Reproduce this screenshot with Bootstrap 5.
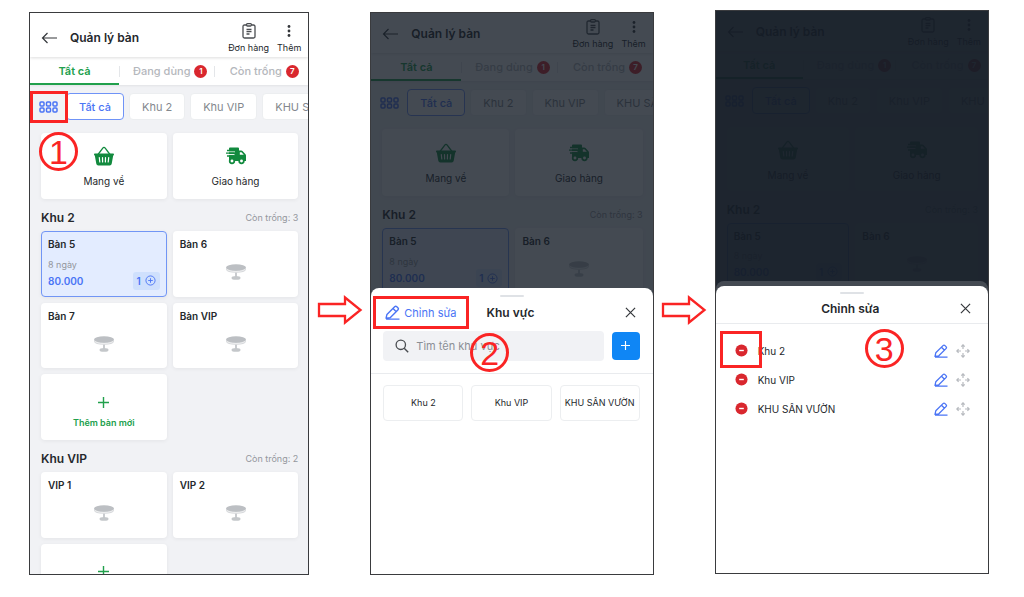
<!DOCTYPE html>
<html lang="vi">
<head>
<meta charset="utf-8">
<meta name="viewport" content="width=device-width, initial-scale=1">
<title>Quản lý bàn</title>
<link href="https://cdn.jsdelivr.net/npm/bootstrap@5.3.0/dist/css/bootstrap.min.css" rel="stylesheet">
<style>
:root { --red: #fa2424; --blue: #4a74f5; --green: #21a04c; --ink: #25282c; }
body { font-family: Inter, "Noto Sans", sans-serif; font-size: 11px; line-height: 14px; color: var(--ink); background: #fff; }
button { font: inherit; color: inherit; background: none; border: 0; padding: 0; }
h1, h2, h3 { margin: 0; font-weight: 600; }
svg { display: block; }
.steps { display: grid; grid-template-columns: 281fr 61px 284fr 61px 275fr; align-items: start; padding: 12px 35px 20px 29px; }
.phone { --head: 40px; --head-pad: 2px; --tabs: 28px; position: relative; overflow: hidden; border: 1px solid #3a3b3e; background: #f1f2f5; aspect-ratio: 284 / 564; }
.phone-one { --head: 44px; --head-pad: 6px; aspect-ratio: 281 / 564; }
.phone-three { margin-top: -2px; aspect-ratio: 275 / 565; }
.flow-arrow { justify-self: center; margin-top: 283px; }
.app-head { height: var(--head); padding: var(--head-pad) 7px 0 11px; background: #fff; box-shadow: 0 1px 3px #0002; position: relative; }
.app-head h1 { font-size: 12px; line-height: 16px; }
.head-action { font-size: 9px; line-height: 11px; gap: 3px; }
.tab-row { height: var(--tabs); background: #fff; font-size: 11px; font-weight: 500; color: #b4b7bc; box-shadow: 0 1px 2px #0001; }
.tab-row button { flex: 1 1 34%; padding-left: 14px; position: relative; white-space: nowrap; }
.tab-row button + button::before { content: ""; position: absolute; left: 0; top: 9px; height: 11px; border-left: 1px solid #e4e6e9; }
.tab-row .tab-on { flex-basis: 32%; padding: 2px 0 0; color: var(--green); font-weight: 600; border-bottom: 2px solid var(--green); }
.tab-row .tab-free { padding-left: 16px; }
.count { width: 13px; height: 13px; border-radius: 50%; background: #d9272e; color: #fff; font-size: 8px; line-height: 13px; font-weight: 600; }
.chips { padding: 8px 0 13px 9px; gap: 5px; overflow: hidden; }
.chip { flex: none; height: 27px; padding: 0 12px; border-radius: 4px; border: 1px solid #eceef0; background: #fff; font-size: 11px; color: #84888e; white-space: nowrap; }
.chip-on { border-color: #6f93f7; color: var(--blue); font-weight: 500; margin-left: 3px; }
.tiles { display: grid; grid-template-columns: 1fr 1fr; gap: 6px; padding: 0 10px 0 11px; }
.tile { aspect-ratio: 126 / 66; border-radius: 4px; background: #fff; box-shadow: 0 1px 4px #0000000f; position: relative; font-size: 10px; }
.tile h3 { font-size: 10px; line-height: 12px; }
.tile-pick { padding-top: 3px; }
.tile-table { padding: 7px; text-align: left; }
.tile-busy { background: #e3ecff; border: 1px solid #7195f5; padding: 6px; }
.tile-new { font-size: 9px; padding-top: 12px; }
.seat { margin: 14px auto 0; }
.stay { font-size: 9px; }
.qty { background: #cfe0fd; border-radius: 3px; padding: 2px 4px 2px 3px; }
.area-head { height: 32px; padding: 11px 10px 0 11px; }
.area-head h2 { font-size: 12px; line-height: 16px; }
.head-note { font-size: 9px; line-height: 16px; }
.faint { color: #94979d; }
.blue { color: var(--blue); }
.green { color: var(--green); }
.dim { position: absolute; inset: 0; background: rgba(21, 29, 39, .8); }
.sheet { position: absolute; inset: 49% 0 0 0; background: #fff; border-radius: 8px 8px 0 0; }
.sheet-areas { padding-top: 1px; }
.sheet-below { inset: 48% 0 0 0; }
.grip { width: 24px; height: 2px; border-radius: 2px; background: #dfe2e6; margin: 6px auto 0; }
.sheet-head { height: 30px; padding: 0 17px 0 14px; display: grid; grid-template-columns: 1fr auto 1fr; align-items: center; }
.sheet-areas .sheet-head { padding-top: 2px; }
.sheet-head h2 { font-size: 12px; line-height: 16px; }
.sheet-head .close-btn { justify-self: end; }
.edit-link { font-size: 11px; }
.search-row { padding: 4px 13px 12px 12px; height: 47px; }
.search { height: 30px; border-radius: 4px; background: #f1f2f5; padding: 0 12px; gap: 7px; }
.search input { border: 0; background: none; outline: 0; font-size: 11px; min-width: 0; width: 100%; padding: 0; }
.search input::placeholder { color: #8b8f95; opacity: 1; }
.add-btn { width: 28px; height: 28px; flex: none; border-radius: 4px; background: #0f86f5; }
.areas { display: grid; grid-template-columns: repeat(3, 1fr); gap: 8px; padding: 11px 13px 0 12px; }
.areas button { height: 36px; border: 1px solid #eceef0; border-radius: 4px; font-size: 9px; white-space: nowrap; }
.rule { border-bottom: 1px solid #e9ebee; }
.edit-list { padding: 12px 18px 0 19px; }
.edit-list li { height: 29px; font-size: 10px; }
.edit-name { padding-left: 10px; }
.frame { position: absolute; border: 3px solid var(--red); pointer-events: none; }
.step-no { position: absolute; width: 39px; height: 39px; border: 3px solid var(--red); border-radius: 50%; font-family: "Liberation Sans", Arial, sans-serif; font-size: 34px; line-height: 34px; text-align: center; color: var(--red); pointer-events: none; }
</style>
</head>
<body>

<svg width="0" height="0" class="position-absolute" aria-hidden="true">
  <symbol id="i-back" viewBox="0 0 16 12"><path d="M15.500 6H1M6 1 1 6l5 5" fill="none" stroke="#34373b" stroke-width="1.200"/></symbol>
  <symbol id="i-clip" viewBox="0 0 14 16"><path d="M4 2H2.500Q1 2 1 3.500v10Q1 15 2.500 15h9q1.500 0 1.500-1.500v-10Q13 2 11.500 2H10" fill="none" stroke="#4a4d51" stroke-width="1.300"/><path d="M4.500 1.800Q4.500.700 5.500.700h3q1 0 1 1.100T8.500 3h-3q-1 0-1-1.200ZM4.500 6.500h5M4.500 8.700h5M4.500 11h3" fill="none" stroke="#4a4d51" stroke-width="1.300"/></symbol>
  <symbol id="i-dots" viewBox="0 0 4 16"><g fill="#34373b"><circle cx="2" cy="3.500" r="1.400"/><circle cx="2" cy="8" r="1.400"/><circle cx="2" cy="12.500" r="1.400"/></g></symbol>
  <symbol id="i-grid" viewBox="0 0 19 12"><g fill="none" stroke="#4a74f5" stroke-width="1.500"><rect x="1" y="1" width="4" height="4" rx="1"/><rect x="7.500" y="1" width="4" height="4" rx="1"/><rect x="14" y="1" width="4" height="4" rx="1"/><rect x="1" y="7" width="4" height="4" rx="1"/><rect x="7.500" y="7" width="4" height="4" rx="1"/><rect x="14" y="7" width="4" height="4" rx="1"/></g></symbol>
  <symbol id="i-basket" viewBox="0 0 20 20"><path d="M4 8.500 8.600 2.300Q10 .500 11.400 2.300L16 8.500" fill="none" stroke="#128a3e" stroke-width="1.300"/><path d="M.800 7.500h18.400q.800 0 .800.900t-.800 1.100L17.700 17.700Q17.400 19.500 15.700 19.500H4.300Q2.600 19.500 2.300 17.700L.800 9.500Q0 9.300 0 8.400t.8-.900Z" fill="#128a3e"/><path d="m5.300 11.500.5 4.500M8.500 11.500l.1 4.500M11.500 11.500l-.1 4.500M14.700 11.500l-.5 4.500" stroke="#fff" stroke-width="1.200" stroke-linecap="round"/></symbol>
  <symbol id="i-truck" viewBox="0 0 20 17"><path d="M3 1Q3 0 4 0h8q1 0 1 1v2h2.300q.700 0 1.200.500l2.800 3q.700.700.700 1.500v5.500H3Z" fill="#128a3e"/><path d="M13.800 4.700h1.700l2.300 2.600h-4Z" fill="#fff"/><path d="M2 4.300h7M2 7.100h6.500" stroke="#fff" stroke-width="1"/><path d="M1 3h8.500M0 5.700h8.500M1 8.500h7" stroke="#128a3e" stroke-width="1.300"/><g fill="#fff" stroke="#128a3e" stroke-width="1.700"><circle cx="6" cy="13.500" r="2.300"/><circle cx="15.500" cy="13.500" r="2.300"/></g></symbol>
  <symbol id="i-seat" viewBox="0 0 20 16"><path d="M0 4v1.500Q1 8.800 10 8.800t10-3.300V4" fill="#d4d6d9"/><ellipse cx="10" cy="3.500" rx="10" ry="3.300" fill="#bcbfc3"/><path d="M.300 4.900Q3 7.500 10 7.500t9.700-2.600" fill="none" stroke="#fff" stroke-width=".6"/><path d="M10 8.800v4.700" stroke="#bcbfc3" stroke-width="1.600"/><ellipse cx="10" cy="13.900" rx="4.500" ry="1.900" fill="#c4c7ca"/></symbol>
  <symbol id="i-plus" viewBox="0 0 11 11"><path d="M5.500 0v11M0 5.500h11" stroke="currentColor" stroke-width="1.400"/></symbol>
  <symbol id="i-ring" viewBox="0 0 12 12"><circle cx="6" cy="6" r="5" fill="none" stroke="currentColor"/><path d="M6 3.500v5M3.500 6h5" stroke="currentColor"/></symbol>
  <symbol id="i-pen" viewBox="0 0 14 14"><path d="M1 12.300 1.800 8.800 9 1.600q1-1 2 0l1 1q1 1 0 2L4.800 11.800ZM7.500 3.200l3 3M1 13.200h12.500" fill="none" stroke="#4a74f5" stroke-width="1.300" stroke-linejoin="round"/></symbol>
  <symbol id="i-x" viewBox="0 0 12 12"><path d="m1 1 10 10M11 1 1 11" stroke="#34373b" stroke-width="1.300"/></symbol>
  <symbol id="i-find" viewBox="0 0 14 14"><circle cx="5.800" cy="5.800" r="4.700" fill="none" stroke="#4a4d51" stroke-width="1.300"/><path d="m9.200 9.200 4 4" stroke="#4a4d51" stroke-width="1.400"/></symbol>
  <symbol id="i-minus" viewBox="0 0 14 14"><circle cx="7" cy="7" r="6.500" fill="#d9272e"/><path d="M4.500 7h5" stroke="#fff" stroke-width="1.500"/></symbol>
  <symbol id="i-move" viewBox="0 0 14 14"><path d="M7 5V1M5.300 2.600 7 .800l1.700 1.800M7 9v4M5.300 11.400 7 13.200l1.700-1.800M5 7H1M2.600 5.300.800 7l1.800 1.700M9 7h4M11.400 5.300 13.200 7l-1.800 1.700" fill="none" stroke="#b7babf" stroke-width="1.200"/></symbol>
  <symbol id="i-arrow" viewBox="0 0 46 30"><path d="M2 9h26V2.500L43.500 15 28 27.500V21H2Z" fill="#fff" stroke="#fa2424" stroke-width="2.300"/></symbol>
</svg>

<template id="table-screen">
  <header class="app-head d-flex align-items-center">
    <button type="button" aria-label="Quay lại"><svg width="17" height="12"><use href="#i-back"/></svg></button>
    <h1 class="ms-2 ps-1 me-auto">Quản lý bàn</h1>
    <button type="button" class="head-action d-flex flex-column align-items-center me-2"><svg width="14" height="16"><use href="#i-clip"/></svg>Đơn hàng</button>
    <button type="button" class="head-action d-flex flex-column align-items-center"><svg width="4" height="16"><use href="#i-dots"/></svg>Thêm</button>
  </header>
  <nav class="tab-row d-flex">
    <button type="button" class="tab-on">Tất cả</button>
    <button type="button" class="d-flex align-items-center gap-1">Đang dùng <span class="count">1</span></button>
    <button type="button" class="tab-free d-flex align-items-center gap-1">Còn trống <span class="count">7</span></button>
  </nav>
  <div class="chips d-flex align-items-center">
    <button type="button" class="flex-shrink-0" aria-label="Khu vực"><svg width="19" height="12"><use href="#i-grid"/></svg></button>
    <button type="button" class="chip chip-on">Tất cả</button>
    <button type="button" class="chip">Khu 2</button>
    <button type="button" class="chip">Khu VIP</button>
    <button type="button" class="chip">KHU SÂN VƯỜN</button>
  </div>
  <div class="tiles">
    <button type="button" class="tile tile-pick d-flex flex-column align-items-center justify-content-center gap-2"><svg width="20" height="20"><use href="#i-basket"/></svg>Mang về</button>
    <button type="button" class="tile tile-pick d-flex flex-column align-items-center justify-content-center gap-2"><svg width="20" height="20"><use href="#i-truck"/></svg>Giao hàng</button>
  </div>
  <div class="area-head d-flex justify-content-between"><h2>Khu 2</h2><span class="faint head-note">Còn trống: 3</span></div>
  <div class="tiles">
    <article class="tile tile-table tile-busy d-flex flex-column">
      <h3>Bàn 5</h3>
      <span class="faint stay mt-auto">8 ngày</span>
      <div class="blue fw-semibold d-flex justify-content-between align-items-center"><span>80.000</span><span class="qty d-flex align-items-center gap-1">1 <svg width="11" height="11"><use href="#i-ring"/></svg></span></div>
    </article>
    <article class="tile tile-table"><h3>Bàn 6</h3><svg class="seat" width="20" height="16"><use href="#i-seat"/></svg></article>
    <article class="tile tile-table"><h3>Bàn 7</h3><svg class="seat" width="20" height="16"><use href="#i-seat"/></svg></article>
    <article class="tile tile-table"><h3>Bàn VIP</h3><svg class="seat" width="20" height="16"><use href="#i-seat"/></svg></article>
    <button type="button" class="tile tile-new green fw-semibold d-flex flex-column align-items-center justify-content-center gap-2"><svg width="11" height="11"><use href="#i-plus"/></svg>Thêm bàn mới</button>
  </div>
  <div class="area-head d-flex justify-content-between"><h2>Khu VIP</h2><span class="faint head-note">Còn trống: 2</span></div>
  <div class="tiles">
    <article class="tile tile-table"><h3>VIP 1</h3><svg class="seat" width="20" height="16"><use href="#i-seat"/></svg></article>
    <article class="tile tile-table"><h3>VIP 2</h3><svg class="seat" width="20" height="16"><use href="#i-seat"/></svg></article>
    <button type="button" class="tile tile-new green d-flex flex-column align-items-center justify-content-center pb-4" aria-label="Thêm bàn mới"><svg width="11" height="11"><use href="#i-plus"/></svg></button>
  </div>
</template>

<main class="steps">
  <section class="phone phone-one">
    <div data-screen></div>
    <span class="frame" style="left:0;top:78px;width:38px;height:32px"></span>
    <span class="step-no" style="left:9px;top:119px">1</span>
  </section>

  <svg class="flow-arrow" width="46" height="30"><use href="#i-arrow"/></svg>

  <section class="phone">
    <div data-screen></div>
    <div class="dim"></div>
    <div class="sheet sheet-areas">
      <div class="grip"></div>
      <div class="sheet-head">
        <button type="button" class="edit-link blue d-flex align-items-center gap-1"><svg width="15" height="15"><use href="#i-pen"/></svg>Chỉnh sửa</button>
        <h2>Khu vực</h2>
        <button type="button" class="close-btn" aria-label="Đóng"><svg width="11" height="11"><use href="#i-x"/></svg></button>
      </div>
      <div class="search-row rule d-flex align-items-center gap-2">
        <label class="search d-flex align-items-center flex-grow-1"><svg width="14" height="14" class="flex-shrink-0"><use href="#i-find"/></svg><input type="text" placeholder="Tìm tên khu vực" aria-label="Tìm tên khu vực"></label>
        <button type="button" class="add-btn text-white d-flex align-items-center justify-content-center" aria-label="Thêm khu vực"><svg width="9" height="9"><use href="#i-plus"/></svg></button>
      </div>
      <div class="areas">
        <button type="button">Khu 2</button>
        <button type="button">Khu VIP</button>
        <button type="button">KHU SÂN VƯỜN</button>
      </div>
    </div>
    <span class="frame" style="left:2px;top:283px;width:96px;height:33px"></span>
    <span class="step-no" style="left:99px;top:320px">2</span>
  </section>

  <svg class="flow-arrow" width="46" height="30"><use href="#i-arrow"/></svg>

  <section class="phone phone-three">
    <div data-screen></div>
    <div class="dim"></div>
    <div class="sheet sheet-below"></div>
    <div class="dim"></div>
    <div class="sheet">
      <div class="grip"></div>
      <div class="sheet-head rule">
        <span></span>
        <h2>Chỉnh sửa</h2>
        <button type="button" class="close-btn" aria-label="Đóng"><svg width="11" height="11"><use href="#i-x"/></svg></button>
      </div>
      <ul class="edit-list list-unstyled m-0">
        <li class="d-flex align-items-center"><button type="button" aria-label="Xóa"><svg width="13" height="13"><use href="#i-minus"/></svg></button><span class="edit-name me-auto">Khu 2</span><button type="button" aria-label="Sửa"><svg width="14" height="14"><use href="#i-pen"/></svg></button><svg class="ms-2" width="14" height="14"><use href="#i-move"/></svg></li>
        <li class="d-flex align-items-center"><button type="button" aria-label="Xóa"><svg width="13" height="13"><use href="#i-minus"/></svg></button><span class="edit-name me-auto">Khu VIP</span><button type="button" aria-label="Sửa"><svg width="14" height="14"><use href="#i-pen"/></svg></button><svg class="ms-2" width="14" height="14"><use href="#i-move"/></svg></li>
        <li class="d-flex align-items-center"><button type="button" aria-label="Xóa"><svg width="13" height="13"><use href="#i-minus"/></svg></button><span class="edit-name me-auto">KHU SÂN VƯỜN</span><button type="button" aria-label="Sửa"><svg width="14" height="14"><use href="#i-pen"/></svg></button><svg class="ms-2" width="14" height="14"><use href="#i-move"/></svg></li>
      </ul>
    </div>
    <span class="frame" style="left:4px;top:320px;width:42px;height:37px"></span>
    <span class="step-no" style="left:149px;top:318px">3</span>
  </section>
</main>

<script src="https://cdn.jsdelivr.net/npm/bootstrap@5.3.0/dist/js/bootstrap.bundle.min.js"></script>
<script>
const tableScreen = document.getElementById('table-screen');
document.querySelectorAll('[data-screen]').forEach(el => el.append(tableScreen.content.cloneNode(true)));
</script>
</body>
</html>
